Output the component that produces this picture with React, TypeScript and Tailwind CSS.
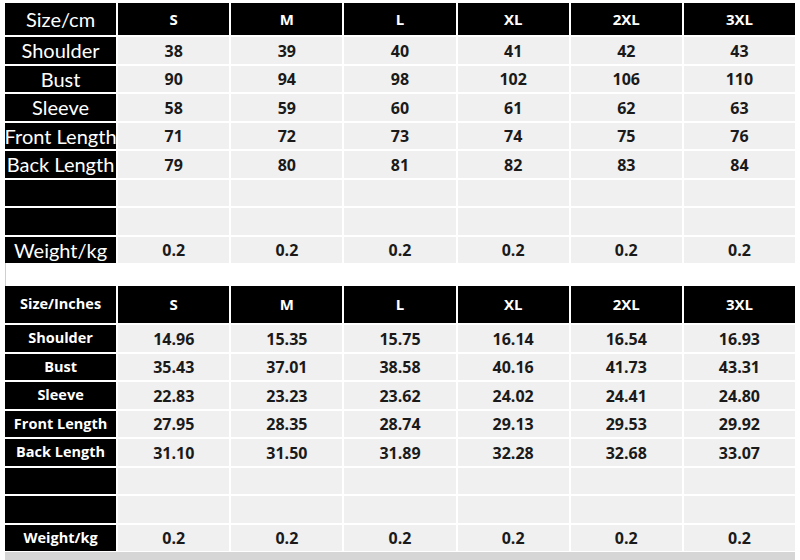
const sizes = ["S", "M", "L", "XL", "2XL", "3XL"];

const cmRows: [string, string[]][] = [
  ["Shoulder", ["38", "39", "40", "41", "42", "43"]],
  ["Bust", ["90", "94", "98", "102", "106", "110"]],
  ["Sleeve", ["58", "59", "60", "61", "62", "63"]],
  ["Front Length", ["71", "72", "73", "74", "75", "76"]],
  ["Back Length", ["79", "80", "81", "82", "83", "84"]],
  ["", ["", "", "", "", "", ""]],
  ["", ["", "", "", "", "", ""]],
  ["Weight/kg", ["0.2", "0.2", "0.2", "0.2", "0.2", "0.2"]],
];

const inchRows: [string, string[]][] = [
  ["Shoulder", ["14.96", "15.35", "15.75", "16.14", "16.54", "16.93"]],
  ["Bust", ["35.43", "37.01", "38.58", "40.16", "41.73", "43.31"]],
  ["Sleeve", ["22.83", "23.23", "23.62", "24.02", "24.41", "24.80"]],
  ["Front Length", ["27.95", "28.35", "28.74", "29.13", "29.53", "29.92"]],
  ["Back Length", ["31.10", "31.50", "31.89", "32.28", "32.68", "33.07"]],
  ["", ["", "", "", "", "", ""]],
  ["", ["", "", "", "", "", ""]],
  ["Weight/kg", ["0.2", "0.2", "0.2", "0.2", "0.2", "0.2"]],
];

function SizeTable({
  title,
  rows,
  headerClass,
  labelClass,
}: {
  title: string;
  rows: [string, string[]][];
  headerClass: string;
  labelClass: string;
}) {
  return (
    <div className="grid grid-cols-7 gap-[2px]">
      <div className={`${headerClass} bg-black text-white flex items-center justify-center ${labelClass}`}>
        {title}
      </div>
      {sizes.map((s) => (
        <div
          key={s}
          className={`${headerClass} bg-black text-white flex items-center justify-center text-[15px] font-bold font-['Open_Sans',sans-serif]`}
        >
          {s}
        </div>
      ))}
      {rows.map(([label, values], i) => (
        <div key={i} className="contents">
          <div
            className={`h-[26.5px] bg-black text-white flex items-center justify-center whitespace-nowrap overflow-hidden ${labelClass}`}
          >
            {label}
          </div>
          {values.map((v, j) => (
            <div
              key={j}
              className="h-[26.5px] bg-[#f0f0f0] text-[#1a1a1a] flex items-center justify-center pt-px text-[16px] font-bold font-['Open_Sans',sans-serif]"
            >
              {v}
            </div>
          ))}
        </div>
      ))}
    </div>
  );
}

export default function App() {
  return (
    <div className="w-[800px] h-[560px] bg-white overflow-hidden pt-[3px] font-['Lato','Open_Sans',sans-serif]">
      <div className="ml-[5px] w-[790px] flex flex-col">
        <SizeTable
          title="Size/cm"
          rows={cmRows}
          headerClass="h-[32px]"
          labelClass="text-[20px] font-normal leading-none font-['Lato',sans-serif]"
        />
        <div className="h-[23px] bg-white border-l border-[#cfcfcf]" />
        <SizeTable
          title="Size/Inches"
          rows={inchRows}
          headerClass="h-[37px]"
          labelClass="text-[14.5px] font-bold leading-none font-['Open_Sans',sans-serif]"
        />
        <div className="mt-px h-[10px] bg-[#d6d6d6]" />
      </div>
    </div>
  );
}
